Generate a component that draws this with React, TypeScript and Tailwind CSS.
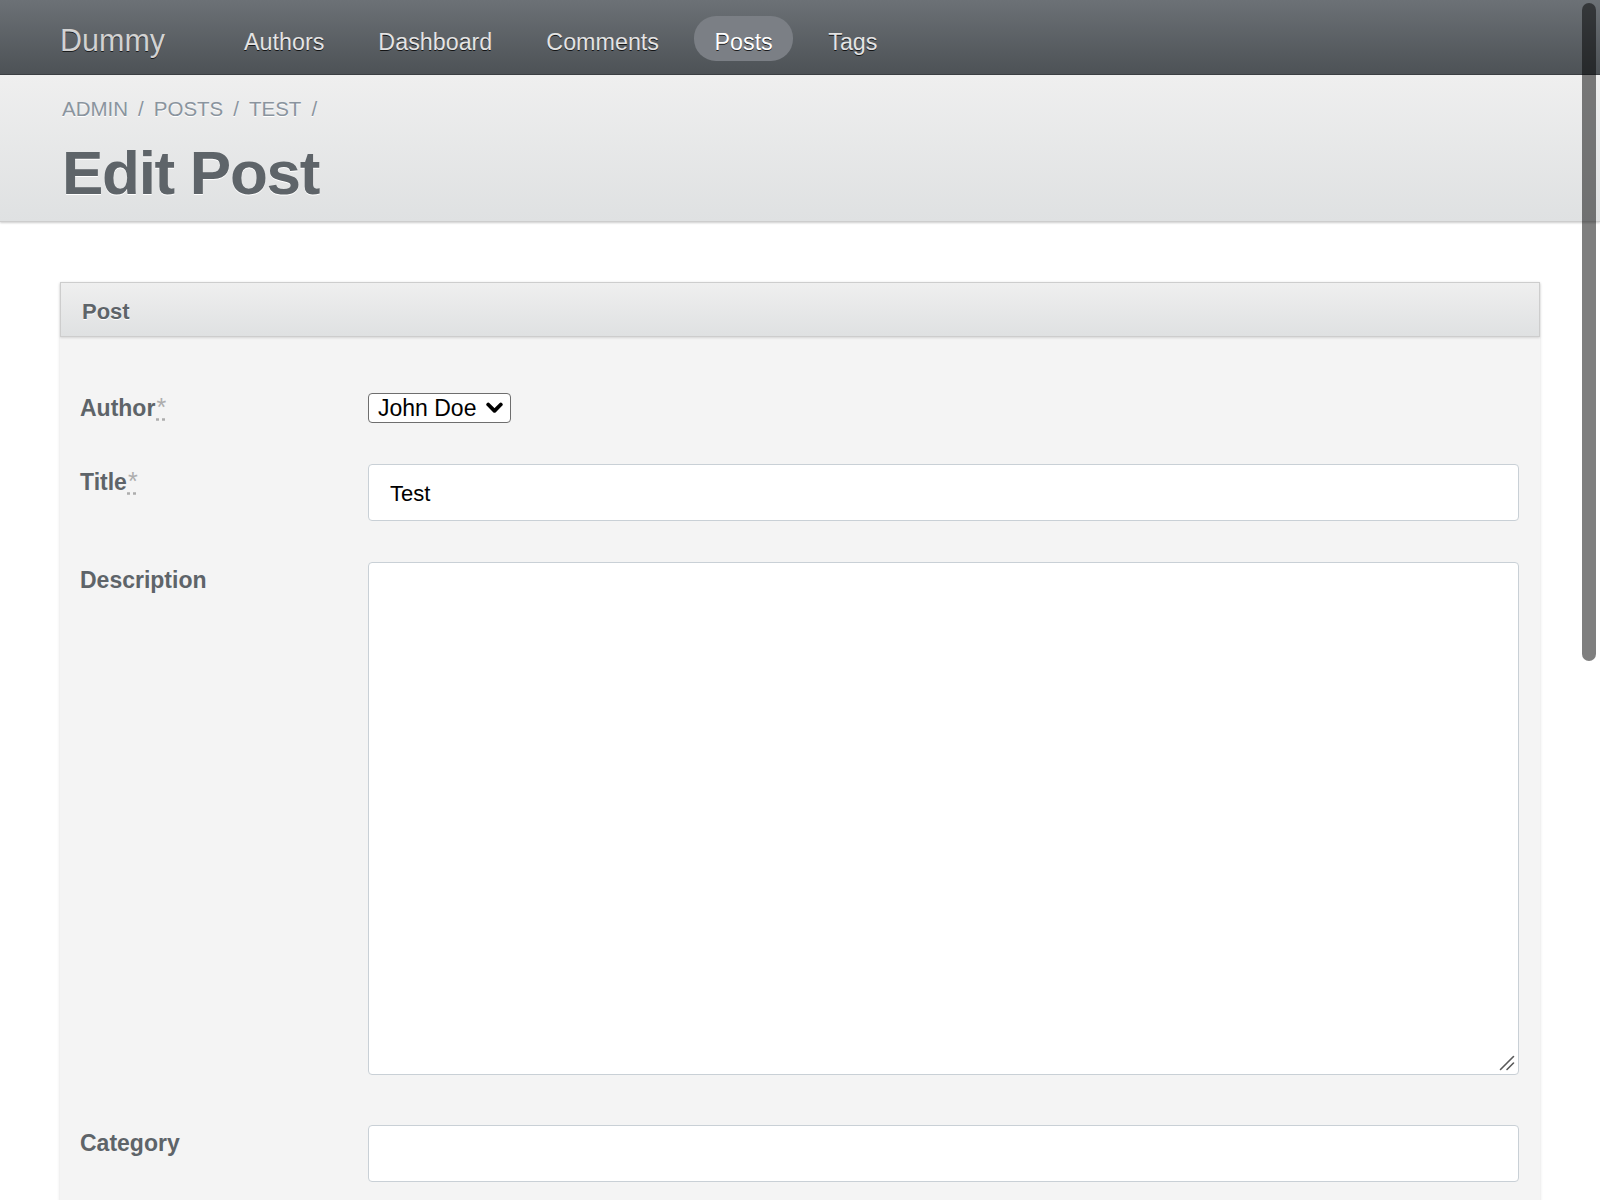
import React from 'react';

const navItems = ['Authors', 'Dashboard', 'Comments', 'Posts', 'Tags'];

const Required = () => (
  <abbr title="required" className="text-[#adadad] font-normal text-[25px] leading-[20px] ml-[1px]">
    *
  </abbr>
);

const App: React.FC = () => {
  return (
    <div className="relative h-[1200px] overflow-hidden bg-white font-['Liberation_Sans',Arial,sans-serif]">
      {/* top header */}
      <div className="h-[75px] flex items-center bg-gradient-to-b from-[#6c7176] to-[#4d5256] border-b border-[#3c4044] pl-[60px]">
        <span className="text-[30.5px] text-[#d2d2d2] [text-shadow:0_1px_0_rgba(0,0,0,0.7)] mr-[60px] mt-[7px]">
          Dummy
        </span>
        <ul className="flex items-center gap-[16px] mt-[2px]">
          {navItems.map((item) => (
            <li key={item}>
              <a
                className={
                  item === 'Posts'
                    ? 'block h-[45px] pt-[6px] leading-[40px] px-[20.5px] rounded-[22px] bg-[#7b7f85] text-white text-[23.3px] [text-shadow:0_1px_0_rgba(0,0,0,0.8)]'
                    : 'block h-[45px] pt-[6px] leading-[40px] px-[19px] text-[#e4e4e4] text-[23.3px] [text-shadow:0_1px_0_rgba(0,0,0,0.8)]'
                }
              >
                {item}
              </a>
            </li>
          ))}
        </ul>
      </div>

      {/* title bar */}
      <div className="bg-gradient-to-b from-[#efefef] to-[#dfe1e2] border-b border-[#cdcdcd] shadow-[0_1px_2px_rgba(0,0,0,0.2)] pl-[62px] pt-[22px] pb-[16px]">
        <div className="flex items-center text-[20.5px] leading-[24px] text-[#8a949e] [text-shadow:0_1px_0_#fff]">
          <span>ADMIN</span>
          <span className="mx-[10px]">/</span>
          <span>POSTS</span>
          <span className="mx-[10px]">/</span>
          <span>TEST</span>
          <span className="mx-[10px]">/</span>
        </div>
        <h2 className="mt-[20px] text-[62px] leading-[64px] font-bold tracking-[-1.3px] text-[#5e6469] [text-shadow:0_1px_0_#fff]">
          Edit Post
        </h2>
      </div>

      {/* panel */}
      <div className="mx-[60px] mt-[60px] bg-[#f4f4f4] shadow-[0_1px_3px_rgba(0,0,0,0.15)] h-[1000px]">
        <h3 className="h-[55px] flex items-center pl-[21px] pt-[4px] bg-gradient-to-b from-[#efefef] to-[#dfe1e2] border border-[#cdcdcd] shadow-[0_1px_2px_rgba(0,0,0,0.12)] text-[22px] font-bold text-[#5e6469] [text-shadow:0_1px_0_#fff]">
          Post
        </h3>
        <div className="pl-[20px] pr-[21px] pt-[56px]">
          <div className="flex items-start">
            <label className="w-[288px] pt-[2px] text-[23px] leading-[27px] font-bold text-[#5e6469]">
              Author<Required />
            </label>
            <div className="relative inline-block">
              <select className="appearance-none h-[30px] w-[143px] border border-[#6e6e6e] rounded-[4px] bg-white pl-[9px] text-[23px] leading-[28px] text-black">
                <option>John Doe</option>
              </select>
              <svg className="absolute right-[8px] top-[9px] pointer-events-none" width="17" height="12" viewBox="0 0 17 12">
                <path d="M2.2 2.5 L8.5 8.8 L14.8 2.5" fill="none" stroke="#000" strokeWidth="3.8" strokeLinecap="round" strokeLinejoin="round" />
              </svg>
            </div>
          </div>

          <div className="flex items-start mt-[41px]">
            <label className="w-[288px] pt-[5px] text-[23px] leading-[27px] font-bold text-[#5e6469]">
              Title<Required />
            </label>
            <input
              defaultValue="Test"
              className="flex-1 h-[57px] border border-[#c9d0d6] rounded-[4px] bg-white px-[21px] pt-[3px] text-[22px] text-black"
            />
          </div>

          <div className="flex items-start mt-[41px]">
            <label className="w-[288px] pt-[5px] text-[23px] leading-[27px] font-bold text-[#5e6469]">
              Description
            </label>
            <div className="relative flex-1 flex">
              <textarea className="flex-1 h-[513px] resize-none border border-[#c9d0d6] rounded-[4px] bg-white px-[21px] py-[10px] text-[22px] text-black" />
              <svg className="absolute right-[4px] bottom-[4px] pointer-events-none" width="16" height="16" viewBox="0 0 16 16">
                <path d="M1.5 14.5 L14.5 1.5 M8 14.5 L14.5 8" stroke="#5a5a5a" strokeWidth="1.6" strokeLinecap="round" />
              </svg>
            </div>
          </div>

          <div className="flex items-start mt-[50px]">
            <label className="w-[288px] pt-[5px] text-[23px] leading-[27px] font-bold text-[#5e6469]">
              Category
            </label>
            <input className="flex-1 h-[57px] border border-[#c9d0d6] rounded-[4px] bg-white px-[21px] text-[22px] text-black" />
          </div>
        </div>
      </div>

      {/* overlay scrollbar */}
      <div className="absolute right-[4px] top-[3px] w-[14px] h-[658px] rounded-full bg-[rgba(0,0,0,0.5)]" />
    </div>
  );
};

export default App;
